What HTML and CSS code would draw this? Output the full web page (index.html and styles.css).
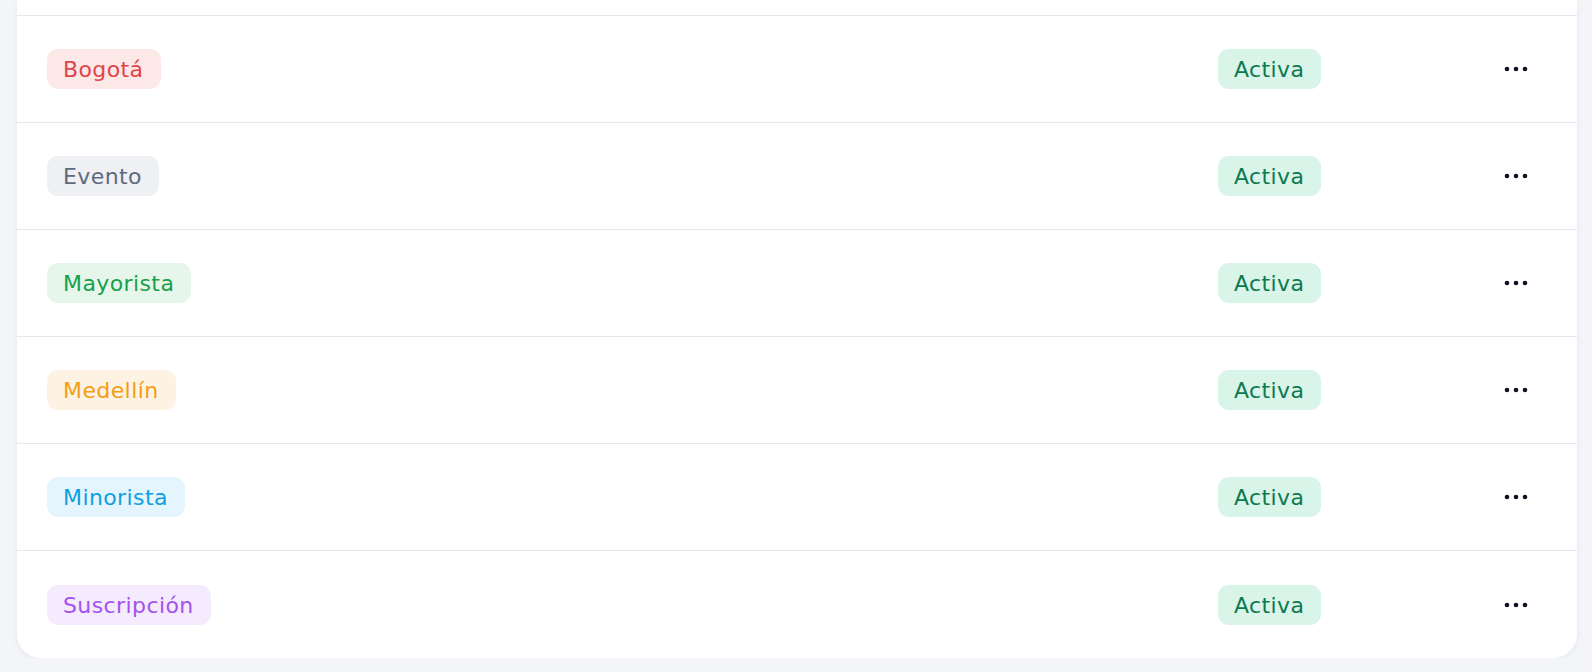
FILE: index.html
```html
<!DOCTYPE html>
<html lang="es">
<head>
<meta charset="utf-8">
<title>Etiquetas</title>
<link rel="stylesheet" href="styles.css">
</head>
<body>
<div class="page">
  <div class="card">
    <div class="row-stub"></div>
    <div class="row">
      <div class="cell"><span class="tag tag-red">Bogotá</span></div>
      <div class="cell"><span class="status">Activa</span></div>
      <div class="cell actions"><svg class="dots" viewBox="0 0 24 6" width="24" height="6"><circle cx="3" cy="3" r="2.3"/><circle cx="12" cy="3" r="2.3"/><circle cx="21" cy="3" r="2.3"/></svg></div>
    </div>
    <div class="row">
      <div class="cell"><span class="tag tag-gray">Evento</span></div>
      <div class="cell"><span class="status">Activa</span></div>
      <div class="cell actions"><svg class="dots" viewBox="0 0 24 6" width="24" height="6"><circle cx="3" cy="3" r="2.3"/><circle cx="12" cy="3" r="2.3"/><circle cx="21" cy="3" r="2.3"/></svg></div>
    </div>
    <div class="row">
      <div class="cell"><span class="tag tag-green">Mayorista</span></div>
      <div class="cell"><span class="status">Activa</span></div>
      <div class="cell actions"><svg class="dots" viewBox="0 0 24 6" width="24" height="6"><circle cx="3" cy="3" r="2.3"/><circle cx="12" cy="3" r="2.3"/><circle cx="21" cy="3" r="2.3"/></svg></div>
    </div>
    <div class="row">
      <div class="cell"><span class="tag tag-orange">Medellín</span></div>
      <div class="cell"><span class="status">Activa</span></div>
      <div class="cell actions"><svg class="dots" viewBox="0 0 24 6" width="24" height="6"><circle cx="3" cy="3" r="2.3"/><circle cx="12" cy="3" r="2.3"/><circle cx="21" cy="3" r="2.3"/></svg></div>
    </div>
    <div class="row">
      <div class="cell"><span class="tag tag-blue">Minorista</span></div>
      <div class="cell"><span class="status">Activa</span></div>
      <div class="cell actions"><svg class="dots" viewBox="0 0 24 6" width="24" height="6"><circle cx="3" cy="3" r="2.3"/><circle cx="12" cy="3" r="2.3"/><circle cx="21" cy="3" r="2.3"/></svg></div>
    </div>
    <div class="row last">
      <div class="cell"><span class="tag tag-purple">Suscripción</span></div>
      <div class="cell"><span class="status">Activa</span></div>
      <div class="cell actions"><svg class="dots" viewBox="0 0 24 6" width="24" height="6"><circle cx="3" cy="3" r="2.3"/><circle cx="12" cy="3" r="2.3"/><circle cx="21" cy="3" r="2.3"/></svg></div>
    </div>
  </div>
</div>
</body>
</html>
```
FILE: styles.css
```css
* { box-sizing: border-box; }
html, body {
  margin: 0;
  padding: 0;
  background: #f4f5f9;
  font-family: "DejaVu Sans", "Open Sans", sans-serif;
}
.page {
  padding: 0 15px 0 17px;
}
.card {
  background: #ffffff;
  border-radius: 0 0 24px 24px;
  box-shadow: 0 2px 6px rgba(20, 30, 60, 0.06);
  overflow: hidden;
}
.row-stub {
  height: 16px;
  border-bottom: 1px solid #e3e8ee;
}
.row {
  display: grid;
  grid-template-columns: 1fr 267px 62px;
  align-items: center;
  height: 107px;
  padding: 0 30px;
  border-bottom: 1px solid #e3e8ee;
}
.row.last {
  border-bottom: none;
}
.cell {
  display: flex;
  align-items: center;
}
.actions {
  justify-content: center;
}
.tag, .status {
  display: inline-flex;
  align-items: center;
  height: 40px;
  padding: 1px 17px 0 16px;
  border-radius: 11px;
  font-size: 22px;
  letter-spacing: 0.4px;
  font-weight: 400;
  white-space: nowrap;
}
.tag-red { background: #fde8e8; color: #df4549; }
.tag-gray { background: #eef0f3; color: #5d6a80; }
.tag-green { background: #e6f6eb; color: #17a04a; }
.tag-orange { background: #fef3e2; color: #f29d16; }
.tag-blue { background: #e5f5fd; color: #0ea0dd; }
.tag-purple { background: #f4ebfe; color: #a452ec; }
.status { background: #d9f4e8; color: #0d7a50; }
.dots { fill: #0f1222; display: block; }
```
